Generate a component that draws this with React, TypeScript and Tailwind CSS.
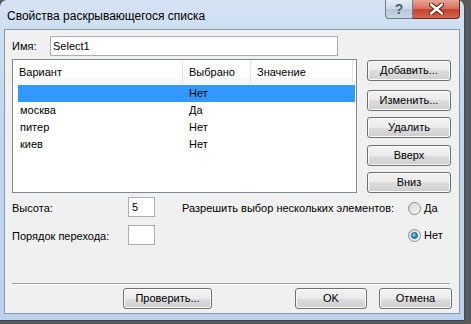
const btn =
  "flex items-center justify-center rounded-[3px] border border-[#707070] bg-[linear-gradient(#f2f2f2_0%,#ebebeb_50%,#dddddd_50%,#cfcfcf_100%)] shadow-[inset_0_0_0_1px_#fbfbfb] text-[11px] text-black";

function Radio({ checked }: { checked?: boolean }) {
  return (
    <span className="flex h-[13px] w-[13px] items-center justify-center rounded-full border border-[#8e8f8f] bg-[linear-gradient(135deg,#d8d8d8,#f4f4f4)]">
      {checked && (
        <span className="h-[7px] w-[7px] rounded-full border border-[#1b5a8e] bg-[radial-gradient(circle_at_35%_35%,#8fdcff,#1d87c9_60%,#0b5d97)]" />
      )}
    </span>
  );
}

const rows = [
  { v: "", s: "Нет", sel: true },
  { v: "москва", s: "Да" },
  { v: "питер", s: "Нет" },
  { v: "киев", s: "Нет" },
];

export default function App() {
  return (
    <div className="h-[324px] w-[471px] overflow-hidden bg-[#5a5a5a] font-['Liberation_Sans',Arial,sans-serif] text-[11px] text-black">
      <div className="flex h-[321px] w-[465px] flex-col rounded-t-[7px] border-r border-b border-[#3f4a57] bg-[linear-gradient(#d4e3f4_0%,#c3d7ee_30%,#bcd2ec_100%)] px-[4px] pb-[6px] pr-[4px]">
        {/* title bar */}
        <div className="flex h-[29px] items-start">
          <span className="mt-[7px] ml-[3px] text-[12px] text-black">Свойства раскрывающегося списка</span>
          <div className="ml-auto flex h-[19px]">
            <div className="flex w-[28px] items-center justify-center rounded-bl-[4px] border border-t-0 border-[#6d7d91] bg-[linear-gradient(#e4ecf5_0%,#ccd8e6_50%,#b6c5d7_50%,#c9d6e4_100%)] text-[14px] font-bold text-[#4e5d6f]">
              ?
            </div>
            <div className="flex w-[47px] items-center justify-center rounded-br-[4px] border border-t-0 border-l-0 border-[#6a2a20] bg-[linear-gradient(#e8a493_0%,#d66e59_50%,#c7402b_50%,#d5654b_100%)]">
              <svg width="15" height="12" viewBox="0 0 15 12">
                <path d="M2 1.5 L13 10.5 M13 1.5 L2 10.5" stroke="#5a1a10" strokeWidth="4.5" strokeLinecap="round" />
                <path d="M2 1.5 L13 10.5 M13 1.5 L2 10.5" stroke="#ffffff" strokeWidth="2.5" strokeLinecap="round" />
              </svg>
            </div>
          </div>
        </div>

        {/* client area */}
        <div className="flex flex-1 flex-col border border-[#8a9aad] bg-[#f0f0f0]">
          <div className="mt-[6px] flex h-[20px] items-center">
            <span className="ml-[7px] w-[38px]">Имя:</span>
            <div className="flex h-[20px] w-[288px] items-center border border-[#abadb3] bg-white pl-[2px]">Select1</div>
          </div>

          <div className="mt-[3px] flex">
            <div className="ml-[7px] h-[134px] w-[345px] border border-[#828790] bg-white">
              <div className="flex h-[24px] bg-[linear-gradient(#ffffff_0%,#ffffff_60%,#f3f4f6_100%)]">
                <div className="flex w-[170px] items-center border-r border-[#e5e5e5] pl-[6px]">Вариант</div>
                <div className="flex w-[68px] items-center border-r border-[#e5e5e5] pl-[6px]">Выбрано</div>
                <div className="flex w-[102px] items-center border-r border-[#e5e5e5] pl-[6px]">Значение</div>
              </div>
              <div className="pt-[1px]">
                {rows.map((r, i) => (
                  <div
                    key={i}
                    className={`ml-[5px] mr-[1px] flex h-[17px] items-center ${r.sel ? "bg-[#3399ff]" : ""}`}
                  >
                    <span className="w-[165px] pl-[2px]">{r.v}</span>
                    <span className="pl-[6px]">{r.s}</span>
                  </div>
                ))}
              </div>
            </div>

            <div className="ml-[10px] mt-[1px] flex w-[84px] flex-col">
              <div className={`${btn} h-[21px]`}>Добавить...</div>
              <div className={`${btn} mt-[9px] h-[21px]`}>Изменить...</div>
              <div className={`${btn} mt-[6px] h-[21px]`}>Удалить</div>
              <div className={`${btn} mt-[7px] h-[21px]`}>Вверх</div>
              <div className={`${btn} mt-[6px] h-[21px]`}>Вниз</div>
            </div>
          </div>

          <div className="mt-[4px] ml-[7px] grid grid-cols-[116px_27px_27px_226px_1fr] grid-rows-[20px_20px] gap-y-[8px]">
            <span className="self-center whitespace-nowrap pt-[3px]">Высота:</span>
            <div className="flex h-[20px] items-center border border-[#abadb3] bg-white pl-[3px]">5</div>
            <span />
            <span className="self-center whitespace-nowrap pt-[3px]">Разрешить выбор нескольких элементов:</span>
            <div className="flex items-center gap-[3px] pt-[3px]">
              <Radio />
              <span>Да</span>
            </div>

            <span className="self-center whitespace-nowrap pt-[2px]">Порядок перехода:</span>
            <div className="h-[20px] border border-[#abadb3] bg-white" />
            <span />
            <span />
            <div className="flex items-center gap-[3px] pt-[1px]">
              <Radio checked />
              <span>Нет</span>
            </div>
          </div>

          <div className="mt-[38px] ml-[7px] w-[438px] border-t border-[#a0a0a0] border-b border-b-white" />

          <div className="mt-[3px] flex">
            <div className={`${btn} ml-[118px] h-[21px] w-[89px]`}>Проверить...</div>
            <div className={`${btn} ml-[83px] h-[21px] w-[72px] border-[#3c7fb1] shadow-[inset_0_0_0_1px_#a8dcf7]`}>OK</div>
            <div className={`${btn} ml-[12px] h-[21px] w-[73px]`}>Отмена</div>
          </div>
        </div>
      </div>
    </div>
  );
}
